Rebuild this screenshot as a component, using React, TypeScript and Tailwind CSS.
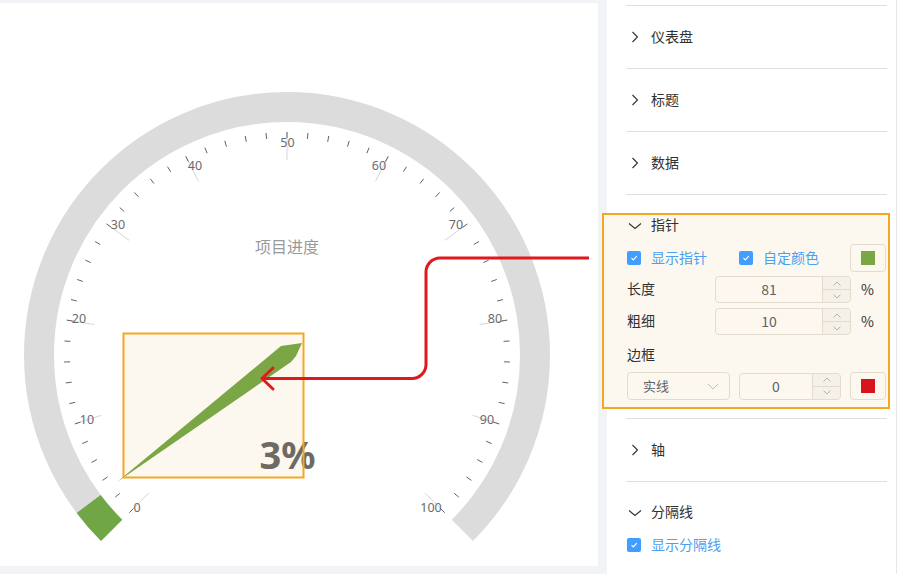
import React from "react";

const CX = 287;
const CY = 355;
const rad = (d: number) => (d * Math.PI) / 180;
const pt = (deg: number, r: number) => [CX + r * Math.cos(rad(deg)), CY - r * Math.sin(rad(deg))];

const LABELS: [number, number, number][] = [
  [0, 137, 507],
  [10, 87, 419],
  [20, 79, 318],
  [30, 118, 224],
  [40, 195, 165],
  [50, 287.5, 142],
  [60, 379, 165],
  [70, 456, 224],
  [80, 495, 318],
  [90, 487, 419],
  [100, 431, 507],
];

function Gauge() {
  const ticks: React.ReactNode[] = [];
  for (let v = 0; v <= 100; v += 10) {
    const a = 225 - 2.7 * v;
    const [x1, y1] = pt(a, 195);
    const [x2, y2] = pt(a, 223);
    ticks.push(<line key={"s" + v} x1={x1} y1={y1} x2={x2} y2={y2} stroke="#d6d6d6" strokeWidth={1} />);
  }
  for (let v = 0; v <= 100; v += 2) {
    const a = 225 - 2.7 * v;
    const [x1, y1] = pt(a, 217);
    const [x2, y2] = pt(a, 223);
    ticks.push(<line key={"t" + v} x1={x1} y1={y1} x2={x2} y2={y2} stroke="#5f6274" strokeWidth={1} />);
  }
  const [sx, sy] = pt(225, 248);
  const [ex, ey] = pt(-45, 248);
  const [gx, gy] = pt(225 - 8.1, 248);
  return (
    <svg width={598} height={563} viewBox="0 3 598 563" className="block" style={{ fontFamily: '"Noto Sans", "Noto Sans CJK SC", sans-serif' }}>
      <path d={`M ${sx} ${sy} A 248 248 0 1 1 ${ex} ${ey}`} fill="none" stroke="#dcdcdc" strokeWidth={30} />
      <path d={`M ${sx} ${sy} A 248 248 0 0 1 ${gx} ${gy}`} fill="none" stroke="#70a645" strokeWidth={30} />
      {ticks}
      {LABELS.map(([v, x, y]) => (
        <text key={"l" + v} x={x} y={y + 4.5} textAnchor="middle" fontSize={12.5} fill="#6b6b6b">
          {v}
        </text>
      ))}
      <text x={287} y={253} textAnchor="middle" fontSize={16} fill="#9a9a9a" style={{ fontFamily: '"Noto Sans CJK SC", sans-serif' }}>
        项目进度
      </text>
      <rect x={123.5} y={333.5} width={180} height={144} fill="#fdf8ef" />
      <polygon points="117,482 281,346 302,343 296,356 291,362" fill="#7aa645" />
      <text x={287.5} y={469} textAnchor="middle" fontSize={38} fontWeight={700} fill="#6d6963">
        3%
      </text>
      <rect x={123.5} y={333.5} width={180} height={144} fill="none" stroke="#f5a623" strokeWidth={2} />
      <path
        d="M 589 258 L 440 258 A 14 14 0 0 0 426 272 L 426 364.5 A 14 14 0 0 1 412 378.5 L 263 378.5"
        fill="none"
        stroke="#e0191f"
        strokeWidth={3}
      />
      <path d="M 273 368 L 262 378.5 L 273 389" fill="none" stroke="#e0191f" strokeWidth={3} strokeLinecap="round" strokeLinejoin="round" />
    </svg>
  );
}

function ChevronRight() {
  return (
    <svg width={8} height={12} viewBox="0 0 8 12" className="ml-[5px]">
      <path d="M1.5 1 L6.5 6 L1.5 11" fill="none" stroke="#303133" strokeWidth={1.1} />
    </svg>
  );
}

function ChevronDown() {
  return (
    <svg width={14} height={8} viewBox="0 0 14 8" className="ml-[2px]">
      <path d="M1 1.5 L7 6.5 L13 1.5" fill="none" stroke="#303133" strokeWidth={1.1} />
    </svg>
  );
}

function Collapsed({ title }: { title: string }) {
  return (
    <div className="h-[63px] border-b border-[#dcdfe6] flex items-center">
      <span className="w-[25px] flex items-center">
        <ChevronRight />
      </span>
      <span className="text-[14px] text-[#303133] mb-[2px]">{title}</span>
    </div>
  );
}

function ExpandedHeader({ title }: { title: string }) {
  return (
    <div className="h-[49px] pt-[12px] flex items-center">
      <span className="w-[25px] flex items-center">
        <ChevronDown />
      </span>
      <span className="text-[14px] text-[#303133] mb-[2px]">{title}</span>
    </div>
  );
}

function Checkbox({ label }: { label: string }) {
  return (
    <span className="flex items-center">
      <span className="w-[14px] h-[14px] ml-px rounded-[2px] bg-[#409eff] flex items-center justify-center">
        <svg width={10} height={10} viewBox="0 0 10 10">
          <path d="M2.5 5.2 L4.3 7 L7.8 3.2" fill="none" stroke="#ffffff" strokeWidth={1.2} />
        </svg>
      </span>
      <span className="ml-[10px] text-[14px] text-[#4ba0f2] mb-[2px]">{label}</span>
    </span>
  );
}

function Swatch({ color }: { color: string }) {
  return (
    <div className="w-[36px] h-[28px] rounded-[4px] border border-[#e2dccf] flex items-center justify-center">
      <div className="w-[14px] h-[14px]" style={{ backgroundColor: color }} />
    </div>
  );
}

function NumInput({ value, w }: { value: string; w: string }) {
  return (
    <div className={`${w} h-[27px] rounded-[4px] border border-[#e2dccf] flex`}>
      <div className="flex-1 flex items-center justify-center text-[14px] text-[#606266]">{value}</div>
      <div className="w-[28px] border-l border-[#e2dccf] bg-[#f6f1e8] rounded-r-[4px] flex flex-col">
        <div className="flex-1 border-b border-[#e2dccf] flex items-center justify-center">
          <svg width={8} height={5} viewBox="0 0 8 5">
            <path d="M0.5 4.5 L4 1 L7.5 4.5" fill="none" stroke="#b5b3ae" strokeWidth={1} />
          </svg>
        </div>
        <div className="flex-1 flex items-center justify-center">
          <svg width={8} height={5} viewBox="0 0 8 5">
            <path d="M0.5 0.5 L4 4 L7.5 0.5" fill="none" stroke="#b5b3ae" strokeWidth={1} />
          </svg>
        </div>
      </div>
    </div>
  );
}

export default function App() {
  return (
    <div
      className="w-[900px] h-[574px] bg-[#f2f3f7] flex overflow-hidden"
      style={{ fontFamily: '"Noto Sans CJK SC", "Noto Sans", sans-serif' }}
    >
      <div className="w-[598px] h-[563px] mt-[3px] bg-white shrink-0">
        <Gauge />
      </div>
      <div className="w-[9px] shrink-0" />
      <div className="w-[289px] h-full bg-white relative shrink-0 pl-[19px] pr-[9px] pt-[5px]">
        <div className="absolute left-[-5px] top-[213px] w-[288px] h-[196px] border-2 border-[#f5a623] bg-[#fdf8ef]" />
        <div className="relative border-t border-[#dcdfe6]">
          <Collapsed title="仪表盘" />
          <Collapsed title="标题" />
          <Collapsed title="数据" />
          <div className="border-b border-[#dcdfe6] pb-[18px]">
            <ExpandedHeader title="指针" />
            <div className="h-[28px] flex items-center">
              <div className="w-[112px]">
                <Checkbox label="显示指针" />
              </div>
              <Checkbox label="自定颜色" />
              <div className="ml-auto mr-px">
                <Swatch color="#7aa645" />
              </div>
            </div>
            <div className="mt-[4px] h-[27px] flex items-center">
              <span className="w-[89px] text-[14px] text-[#303133] pl-px mb-[2px]">长度</span>
              <NumInput value="81" w="w-[136px]" />
              <span className="ml-[10px] text-[14px] text-[#303133]">%</span>
            </div>
            <div className="mt-[5px] h-[27px] flex items-center">
              <span className="w-[89px] text-[14px] text-[#303133] pl-px mb-[2px]">粗细</span>
              <NumInput value="10" w="w-[136px]" />
              <span className="ml-[10px] text-[14px] text-[#303133]">%</span>
            </div>
            <div className="mt-[6px] h-[28px] flex items-center text-[14px] text-[#303133] pl-px pb-[2px]">边框</div>
            <div className="mt-[3px] h-[28px] flex items-center">
              <div className="w-[103px] h-[28px] ml-px rounded-[4px] border border-[#e2dccf] flex items-center pl-[15px] pr-[10px]">
                <span className="text-[13px] text-[#606266]">实线</span>
                <svg width={12} height={7} viewBox="0 0 12 7" className="ml-auto">
                  <path d="M1 1 L6 6 L11 1" fill="none" stroke="#c0bdb7" strokeWidth={1} />
                </svg>
              </div>
              <div className="ml-[9px]">
                <NumInput value="0" w="w-[102px]" />
              </div>
              <div className="ml-auto mr-px">
                <Swatch color="#d7141e" />
              </div>
            </div>
          </div>
          <Collapsed title="轴" />
          <ExpandedHeader title="分隔线" />
          <div className="h-[28px] flex items-center">
            <Checkbox label="显示分隔线" />
          </div>
        </div>
      </div>
      <div className="w-[4px] h-full bg-white border-l border-[#e6e6e6] shrink-0" />
    </div>
  );
}
